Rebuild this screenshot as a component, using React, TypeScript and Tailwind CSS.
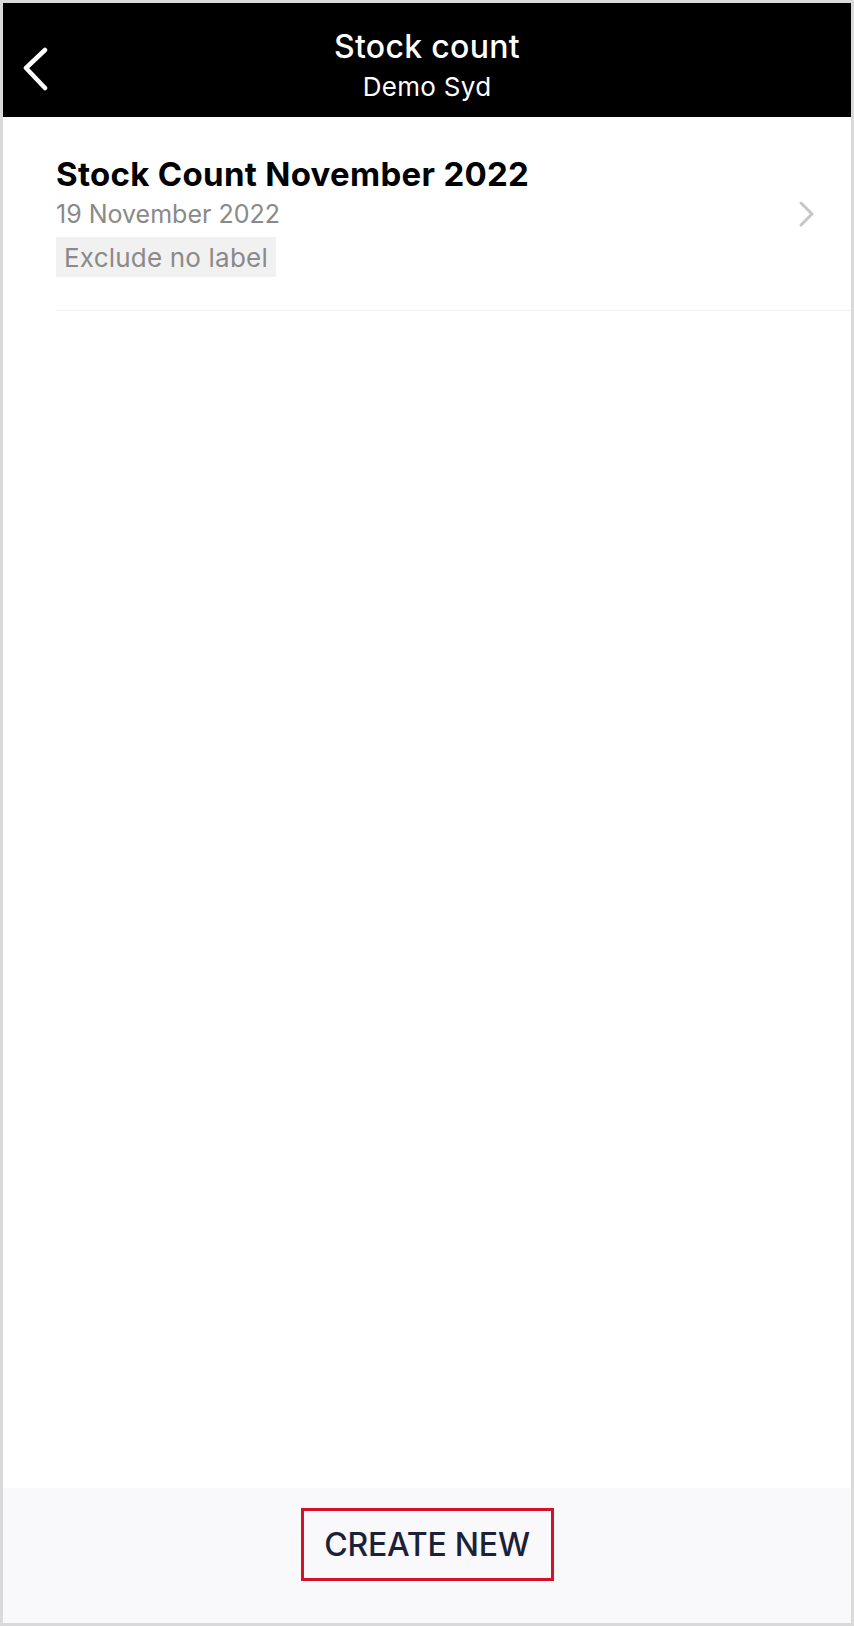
export default function App() {
  return (
    <div
      className="flex h-[1626px] w-full flex-col border-[3px] border-[#d9d9d9] bg-white"
      style={{ fontFamily: "Inter, 'Noto Sans', sans-serif" }}
    >
      <header className="relative flex h-[114px] shrink-0 flex-col items-center bg-black pt-[25px] text-white">
        <button className="absolute left-[20px] top-[44px]" aria-label="Back">
          <svg width="28" height="44" viewBox="0 0 28 44" fill="none">
            <path d="M22 3 L3 21 L22 41" stroke="white" strokeWidth="4.5" strokeLinecap="round" strokeLinejoin="round" />
          </svg>
        </button>
        <h1 className="text-[32px] font-medium leading-[38px] tracking-[0.3px]">Stock count</h1>
        <p className="mt-[5px] text-[26px] leading-[32px] tracking-[0.3px]">Demo Syd</p>
      </header>

      <main className="flex-1">
        <div className="ml-[53px] flex items-center border-b border-[#f0f0f0] pb-[33px] pt-[38px]">
          <div className="flex-1">
            <h2 className="text-[33px] font-bold leading-[38px] tracking-[0.3px] text-black">
              Stock Count November 2022
            </h2>
            <p className="mt-[5px] text-[25px] leading-[32px] text-[#8a8a8a]">19 November 2022</p>
            <span className="mt-[7px] inline-flex h-[40px] items-center bg-[#f1f1f1] px-[8px] text-[26px] tracking-[0.2px] text-[#8a8a8a]">
              Exclude no label
            </span>
          </div>
          <svg className="mb-[4px] mr-[36px]" width="17" height="28" viewBox="0 0 17 28" fill="none">
            <path d="M3 3 L14 14 L3 25" stroke="#c6c6c6" strokeWidth="3" strokeLinecap="round" strokeLinejoin="round" />
          </svg>
        </div>
      </main>

      <footer className="flex h-[135px] shrink-0 justify-center bg-[#f9f8fa] pt-[20px]">
        <button className="flex h-[73px] w-[253px] items-center justify-center border-[3px] border-[#d4102c] text-[32px] font-medium tracking-[-0.2px] text-[#1b2238]">
          CREATE NEW
        </button>
      </footer>
    </div>
  );
}
